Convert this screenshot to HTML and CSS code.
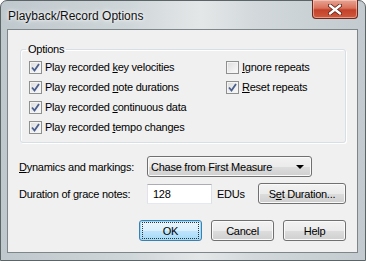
FILE: index.html
```html
<!DOCTYPE html>
<html lang="en">
<head>
<meta charset="UTF-8">
<meta name="viewport" content="width=device-width, initial-scale=1.0">
<title>Playback/Record Options</title>
<link rel="stylesheet" href="styles.css">
</head>
<body>
<div class="window">
  <div class="titlebar">
    <span class="title">Playback/Record Options</span>
    <span class="close">
      <svg width="14" height="11" viewBox="0 0 14 11">
        <path d="M2 1.5 L12 9.5 M12 1.5 L2 9.5" stroke="#5a1e14" stroke-width="4" stroke-linecap="round"/>
        <path d="M2 1.5 L12 9.5 M12 1.5 L2 9.5" stroke="#fff" stroke-width="2.4" stroke-linecap="round"/>
      </svg>
    </span>
  </div>
  <div class="client">
    <fieldset class="group">
      <legend>Options</legend>
      <div class="opts">
        <div class="col">
          <label class="check"><span class="box on"></span><span>Play recorded <u>k</u>ey velocities</span></label>
          <label class="check"><span class="box on"></span><span>Play recorded <u>n</u>ote durations</span></label>
          <label class="check"><span class="box on"></span><span>Play recorded <u>c</u>ontinuous data</span></label>
          <label class="check"><span class="box on"></span><span>Play recorded <u>t</u>empo changes</span></label>
        </div>
        <div class="col right">
          <label class="check"><span class="box"></span><span><u>I</u>gnore repeats</span></label>
          <label class="check"><span class="box on"></span><span><u>R</u>eset repeats</span></label>
        </div>
      </div>
    </fieldset>

    <div class="field first">
      <span class="lbl"><u>D</u>ynamics and markings:</span>
      <span class="combo"><span>Chase from First Measure</span><span class="arrow"></span></span>
    </div>
    <div class="field">
      <span class="lbl">Duration of <u>g</u>race notes:</span>
      <span class="edit">128</span>
      <span class="unit">EDUs</span>
      <span class="btn wide"><span>S<u>e</u>t Duration...</span></span>
    </div>

    <div class="buttons">
      <span class="btn default"><span class="focus">OK</span></span>
      <span class="btn">Cancel</span>
      <span class="btn">Help</span>
    </div>
  </div>
</div>
</body>
</html>
```

FILE: styles.css
```css
body {margin: 0; font-family: "Liberation Sans", Arial, sans-serif; font-size: 11px; letter-spacing: -0.25px; color: #000; background: #fff;}
u {text-decoration: underline; text-underline-offset: 1px;}

.window {
  width: 366px;
  height: 261px;
  box-sizing: border-box;
  border: 1px solid #5d6468;
  border-radius: 7px 7px 0 0;
  background: linear-gradient(to right, #bfc8cd 0%, #cfd6d9 35%, #e4e7e8 55%, #d2d8db 70%, #c3cbd0 100%);
  display: flex;
  flex-direction: column;
  padding: 0 7px 7px 6px;
}

.titlebar {height: 28px; display: flex; align-items: flex-start;}
.title {font-size: 12px; letter-spacing: 0; margin: 8px 0 0 1px; color: #111; text-shadow: 0 0 6px #fff, 0 0 3px #fff;}
.close {
  margin-left: auto;
  margin-top: -1px;
  width: 46px;
  height: 19px;
  box-sizing: border-box;
  border: 1px solid #6b2a20;
  border-top: none;
  border-radius: 0 0 4px 4px;
  background: linear-gradient(#e8a493 0%, #d9725c 45%, #c3412a 55%, #d05a3d 100%);
  box-shadow: inset 0 0 0 1px rgba(255, 220, 210, 0.5);
  display: flex;
  align-items: center;
  justify-content: center;
}

.client {
  flex: 1;
  border: 1px solid #7f868a;
  background: #f0f0f0;
  padding: 0 11px;
}

.group {
  margin: 12px 0 0 1px;
  padding: 1px 8px 5px 8px;
  border: 1px solid #d5dfe5;
  border-radius: 3px;
  box-shadow: inset 1px 1px 0 #fff, 1px 1px 0 #fff;
  min-width: 0;
}
.group legend {padding: 0 2px; margin-left: -3px; line-height: 14px;}

.opts {display: flex;}
.col {display: flex; flex-direction: column; width: 197px;}
.col.right {width: auto;}
.check {display: flex; align-items: center; gap: 3px; height: 20px;}

.box {
  width: 13px;
  height: 13px;
  box-sizing: border-box;
  border: 1px solid #8e8f8f;
  background: linear-gradient(135deg, #dcdcdc, #fbfbfb);
  box-shadow: inset 0 0 0 1px #f4f4f4;
}
.box.on {
  background: url("data:image/svg+xml,%3Csvg xmlns='http://www.w3.org/2000/svg' width='11' height='11'%3E%3Cpath d='M2 5.5 L4.5 8.5 L9 2' fill='none' stroke='%234a5f8e' stroke-width='1.8'/%3E%3C/svg%3E") center no-repeat, linear-gradient(135deg, #dcdcdc, #fbfbfb);
}

.field {display: flex; align-items: center; height: 21px; margin-top: 6px;}
.field.first {margin-top: 13px;}
.lbl {width: 128px;}

.combo {
  width: 165px;
  height: 21px;
  box-sizing: border-box;
  border: 1px solid #707070;
  border-radius: 3px;
  background: linear-gradient(#f2f2f2 0%, #ebebeb 50%, #dddddd 51%, #cfcfcf 100%);
  box-shadow: inset 0 0 0 1px #fafafa;
  display: flex;
  align-items: center;
  padding: 0 7px 0 3px;
}
.arrow {margin-left: auto; border-top: 4px solid #000; border-left: 4px solid transparent; border-right: 4px solid transparent;}

.edit {
  width: 65px;
  height: 20px;
  box-sizing: border-box;
  border: 1px solid #abadb3;
  border-color: #abadb3 #dbdfe6 #e3e9ef #e2e3ea;
  background: #fff;
  padding: 3px 0 0 5px;
}
.unit {margin-left: 5px; width: 41px;}

.btn {
  display: flex;
  align-items: center;
  justify-content: center;
  width: 63px;
  height: 21px;
  box-sizing: border-box;
  border: 1px solid #707070;
  border-radius: 3px;
  background: linear-gradient(#f2f2f2 0%, #ebebeb 50%, #dddddd 51%, #cfcfcf 100%);
  box-shadow: inset 0 0 0 1px #fafafa;
}
.btn.wide {width: 88px;}
.btn.default {
  border-color: #3c7fb1;
  background: linear-gradient(#eaf6fd 0%, #d9f0fc 50%, #bee6fd 51%, #a7d9f5 100%);
  box-shadow: inset 0 0 0 1px #9fdcf8;
}
.focus {display: flex; align-items: center; justify-content: center; width: 55px; height: 15px; outline: 1px dotted #333;}

.buttons {display: flex; justify-content: flex-end; gap: 9px; margin-top: 16px;}
```
